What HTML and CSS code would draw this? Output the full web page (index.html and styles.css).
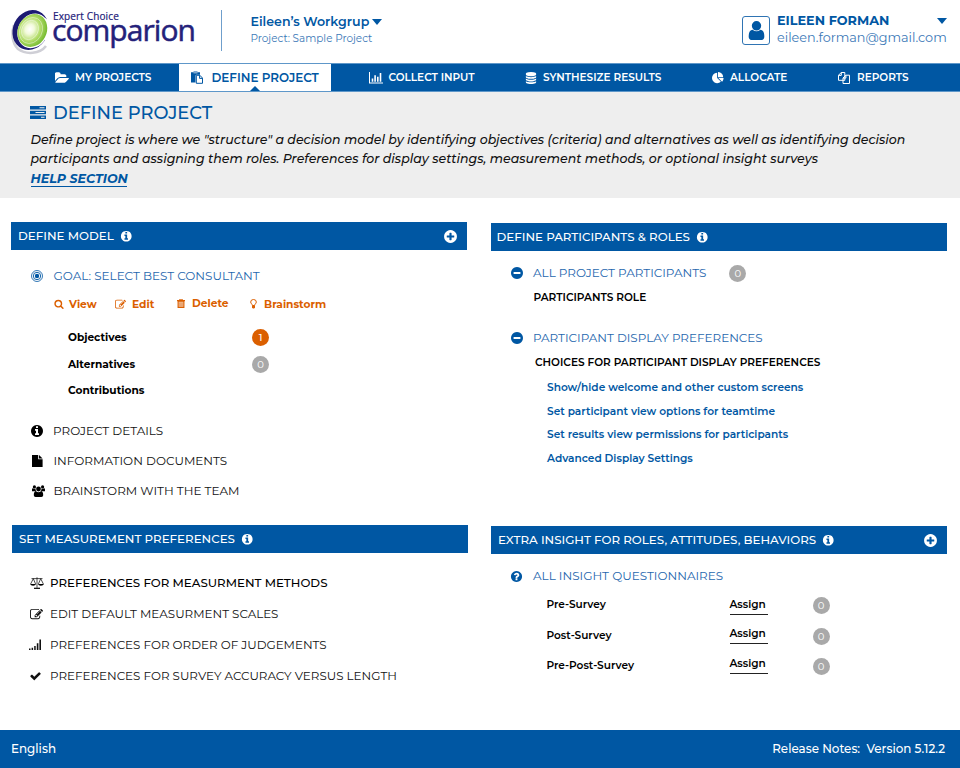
FILE: index.html
```html
<!DOCTYPE html>
<html lang="en">
<head>
<meta charset="utf-8">
<title>Comparion - Define Project</title>
<link rel="stylesheet" href="styles.css">
</head>
<body>
<svg class="sprite" aria-hidden="true">
  <symbol id="info" viewBox="0 0 1792 1792"><path d="M1152 1376v-160q0-14-9-23t-23-9h-96v-512q0-14-9-23t-23-9h-320q-14 0-23 9t-9 23v160q0 14 9 23t23 9h96v320h-96q-14 0-23 9t-9 23v160q0 14 9 23t23 9h448q14 0 23-9t9-23zm-128-896v-160q0-14-9-23t-23-9h-192q-14 0-23 9t-9 23v160q0 14 9 23t23 9h192q14 0 23-9t9-23zm640 416q0 209-103 385.500t-279.500 279.500-385.500 103-385.500-103-279.500-279.500-103-385.500 103-385.500 279.500-279.500 385.500-103 385.500 103 279.500 279.500 103 385.500z"/></symbol>
  <symbol id="plus" viewBox="0 0 1792 1792"><path d="M1344 960v-128q0-26-19-45t-45-19h-256v-256q0-26-19-45t-45-19h-128q-26 0-45 19t-19 45v256h-256q-26 0-45 19t-19 45v128q0 26 19 45t45 19h256v256q0 26 19 45t45 19h128q26 0 45-19t19-45v-256h256q26 0 45-19t19-45zm320-64q0 209-103 385.500t-279.500 279.500-385.500 103-385.500-103-279.500-279.500-103-385.500 103-385.500 279.500-279.500 385.500-103 385.500 103 279.500 279.500 103 385.500z"/></symbol>
  <symbol id="minus" viewBox="0 0 1792 1792"><path d="M1344 960v-128q0-26-19-45t-45-19h-768q-26 0-45 19t-19 45v128q0 26 19 45t45 19h768q26 0 45-19t19-45zm320-64q0 209-103 385.500t-279.500 279.500-385.500 103-385.500-103-279.500-279.500-103-385.500 103-385.500 279.500-279.500 385.500-103 385.500 103 279.500 279.500 103 385.500z"/></symbol>
  <symbol id="question" viewBox="0 0 1792 1792"><path d="M1024 1376v-192q0-14-9-23t-23-9h-192q-14 0-23 9t-9 23v192q0 14 9 23t23 9h192q14 0 23-9t9-23zm256-672q0-88-55.500-163t-138.500-116-170-41q-243 0-371 213-15 24 8 42l132 100q7 6 19 6 16 0 25-12 53-68 86-92 34-24 86-24 48 0 85.500 26t37.500 59q0 38-20 61t-68 45q-63 28-115.500 86.500t-52.500 125.500v36q0 14 9 23t23 9h192q14 0 23-9t9-23q0-19 21.500-49.500t54.500-49.500q32-18 49-28.500t46-35 44.500-48 28-60.500 12.500-81zm384 192q0 209-103 385.500t-279.500 279.500-385.500 103-385.500-103-279.500-279.500-103-385.500 103-385.500 279.500-279.500 385.500-103 385.500 103 279.500 279.500 103 385.500z"/></symbol>
  <symbol id="folder" viewBox="-40 0 1872 1792"><path d="M1815 952q0 31-31 66l-336 396q-43 51-120.500 86.500t-143.500 35.500h-1088q-34 0-60.500-13t-26.500-43q0-31 31-66l336-396q43-51 120.500-86.500t143.500-35.500h1088q34 0 60.500 13t26.500 43zm-343-344v160h-832q-94 0-197 47.500t-164 119.500l-337 396-5 6q0-4-.5-12.500t-.5-12.500v-960q0-92 66-158t158-66h320q92 0 158 66t66 158v32h544q92 0 158 66t66 158z"/></symbol>
  <symbol id="paste" viewBox="0 0 12 13"><path fill-rule="evenodd" d="M0 1.200h2.500V.4h4v.8H9v2.500H5.200L4.500 4.500V11.500H0zM2.500 1.500v.7h4v-.7z"/><path d="M5.300 4.300h3.600l2.600 2.800v5.200H5.300z" fill="#fff" stroke="currentColor"/><path d="M8.600 4.300v3.100h2.900" fill="none" stroke="currentColor"/></symbol>
  <symbol id="chart" viewBox="0 0 14 12"><path d="M0 0h1v10.500h13v1H0zM2.700 6.500h1.600v3.200H2.700zM5.300 3.200h1.600v6.500H5.300zM8 4.800h1.600v4.900H8zM10.700 1h1.600v8.700h-1.600z"/></symbol>
  <symbol id="database" viewBox="0 0 1792 1792"><path d="M896 768q237 0 443-43t325-127v170q0 69-103 128t-280 93.500-385 34.500-385-34.500-280-93.500-103-128v-170q119 84 325 127t443 43zm0 768q237 0 443-43t325-127v170q0 69-103 128t-280 93.500-385 34.500-385-34.500-280-93.500-103-128v-170q119 84 325 127t443 43zm0-384q237 0 443-43t325-127v170q0 69-103 128t-280 93.500-385 34.500-385-34.500-280-93.500-103-128v-170q119 84 325 127t443 43zm0-1152q208 0 385 34.500t280 93.500 103 128v128q0 69-103 128t-280 93.500-385 34.500-385-34.500-280-93.500-103-128v-128q0-69 103-128t280-93.500 385-34.500z"/></symbol>
  <symbol id="pie" viewBox="0 0 1792 1792"><path d="M768 890l546 546q-106 108-247.500 168t-298.500 60q-209 0-385.500-103t-279.500-279.500-103-385.500 103-385.500 279.500-279.500 385.500-103v762zm187 6h773q0 157-60 298.500t-168 247.500zm709-128h-768v-768q209 0 385.500 103t279.500 279.500 103 385.500z"/></symbol>
  <symbol id="files" viewBox="0 0 12 12"><path d="M3.200 .5h3.600v7.800H.5V3.300zM3.300 .5v2.900H.5M7.800 3.200h3.700v8.300H5V6zM7.900 3.200v2.900H5" fill="none" stroke="currentColor"/></symbol>
  <symbol id="tasks" viewBox="0 0 16 13"><path fill-rule="evenodd" d="M0 0h16v3.600H0zM9.500 1.300v1h5v-1zM0 4.700h16v3.600H0zM5.500 6v1h9V6zM0 9.400h16V13H0zM11 10.700v1h3.500v-1z"/></symbol>
  <symbol id="search" viewBox="0 0 1792 1792"><path d="M1216 832q0-185-131.500-316.500t-316.500-131.500-316.500 131.500-131.500 316.500 131.500 316.500 316.500 131.500 316.500-131.500 131.500-316.500zm512 832q0 52-38 90t-90 38q-54 0-90-38l-343-342q-179 124-399 124-143 0-273.500-55.500t-225-150-150-225-55.500-273.500 55.500-273.500 150-225 225-150 273.500-55.500 273.500 55.500 225 150 150 225 55.500 273.500q0 220-124 399l343 343q37 37 37 90z"/></symbol>
  <symbol id="edit" viewBox="0 0 1792 1792"><path d="M888 1184l116-116-152-152-116 116v56h96v96h56zm440-720q-16-16-33 1l-350 350q-17 17-1 33t33-1l350-350q17-17 1-33zm80 594v190q0 119-84.500 203.500t-203.500 84.500h-832q-119 0-203.500-84.500t-84.500-203.500v-832q0-119 84.500-203.500t203.500-84.500h832q63 0 117 25 15 7 18 23 3 17-9 29l-49 49q-14 14-32 8-23-6-45-6h-832q-66 0-113 47t-47 113v832q0 66 47 113t113 47h832q66 0 113-47t47-113v-126q0-13 9-22l64-64q15-15 35-7t20 29zm-96-738l288 288-672 672h-288v-288zm444 132l-92 92-288-288 92-92q28-28 68-28t68 28l152 152q28 28 28 68t-28 68z"/></symbol>
  <symbol id="trash" viewBox="0 0 8 9"><path d="M2.500 1V.4h3V1" fill="none" stroke="currentColor" stroke-width=".8"/><path d="M0 1h8v1.200H0z"/><path d="M1.100 2.200h5.800v6.200H1.100z" fill="#f0bf99" stroke="currentColor" stroke-width="1.100"/><path d="M3 3.500v3.600M5 3.500v3.600" stroke="currentColor" stroke-width=".5"/></symbol>
  <symbol id="bulb" viewBox="0 0 7 10"><path d="M2.400 6.500C2.400 5.200.7 4.600.7 3a2.800 2.500 0 0 1 5.600 0c0 1.600-1.700 2.200-1.700 3.500z" fill="none" stroke="currentColor"/><path d="M2 6.600h3v2.200l-1 .8H3l-1-.8z"/></symbol>
  <symbol id="file" viewBox="0 0 11 12"><path d="M0 0h6.200v4.300H10.600V12H0zM7 0l3.600 3.500H7z"/></symbol>
  <symbol id="users" viewBox="0 0 13 12"><circle cx="2.400" cy="1.900" r="1.600"/><circle cx="10.600" cy="1.900" r="1.600"/><circle cx="6.500" cy="4" r="2.400"/><path d="M0 6.300V4.600c0-1 .5-1.300 1-1.300 1 .7 2 .5 2.600.3-.2 1.200.2 2.200.7 2.700H0zM13 6.300V4.600c0-1-.5-1.300-1-1.300-1 .7-2 .5-2.600.3.200 1.200-.2 2.200-.7 2.700H13zM1.800 10c0-2.400.8-3.700 2.200-3.700 1.500 1.300 3.500 1.300 5 0 1.400 0 2.200 1.300 2.200 3.700 0 1.200-.7 1.900-1.800 1.900H3.600c-1.100 0-1.800-.7-1.800-1.900z"/></symbol>
  <symbol id="scale" viewBox="0 0 14 12"><g fill="none" stroke="currentColor" stroke-width=".7"><path d="M1.500 1.600h11M7 .3v10.500M3.300 1.700L.6 7M3.300 1.700L5.600 7M10.700 1.700L8.400 7M10.700 1.700L13.400 7"/><path d="M4 11.300h6" stroke-width="1.200"/></g><path d="M.2 7h5.700c-.3 1.200-1.300 1.700-2.800 1.700S.5 8.200.2 7zM8.100 7h5.700c-.3 1.200-1.300 1.700-2.900 1.700S8.400 8.200 8.100 7z"/></symbol>
  <symbol id="signal" viewBox="0 0 12 11"><path d="M0 9.600h1.500V11H0zM2.600 8.800h1.500V11H2.600zM5.200 7h1.500v4H5.200zM7.800 4.300h1.600V11H7.800zM10.400 .5H12V11h-1.600z"/></symbol>
  <symbol id="check" viewBox="0 0 1792 1792"><path d="M1671 566q0 40-28 68l-724 724-136 136q-28 28-68 28t-68-28l-136-136-362-362q-28-28-28-68t28-68l136-136q28-28 68-28t68 28l294 295 656-657q28-28 68-28t68 28l136 136q28 28 28 68z"/></symbol>
  <symbol id="target" viewBox="0 0 12 12"><g fill="none" stroke="currentColor"><circle cx="6" cy="6" r="5.500" stroke-width=".8"/><circle cx="6" cy="6" r="3.700" stroke-width=".9"/></g><circle cx="6" cy="6" r="2.200"/></symbol>
  <symbol id="user" viewBox="200 128 1392 1536"><path d="M1536 1399q0 109-62.500 187t-150.500 78h-854q-88 0-150.500-78t-62.500-187q0-85 8.500-160.500t31.500-152 58.500-131 94-89 134.500-34.500q131 128 313 128t313-128q76 0 134.500 34.500t94 89 58.500 131 31.500 152 8.500 160.500zm-256-887q0 159-112.500 271.500t-271.500 112.500-271.500-112.500-112.500-271.500 112.500-271.500 271.500-112.500 271.500 112.500 112.500 271.500z"/></symbol>
</svg>

<header class="top">
  <div class="logo">
    <svg class="logo-mark" viewBox="0 0 40 46">
      <defs><radialGradient id="lime" cx=".4" cy=".5" r=".6"><stop offset="0" stop-color="#fff"/><stop offset=".25" stop-color="#f2fadb"/><stop offset=".6" stop-color="#b4dd6b"/><stop offset="1" stop-color="#72b92c"/></radialGradient></defs>
      <path d="M35 38C29 46 15 47 7 41C1 35 0 25 3 17" fill="none" stroke="#cfcfd6" stroke-width="2.500"/>
      <ellipse cx="19.500" cy="22" rx="17.500" ry="20.500" transform="rotate(25 19.500 22)" fill="#1c1a72"/>
      <ellipse cx="22" cy="22.800" rx="15" ry="18" transform="rotate(28 22 22.800)" fill="#fff"/>
      <path d="M34 10L40 14V32L34 35z" fill="#fff"/>
      <ellipse cx="21.300" cy="22.500" rx="14.300" ry="17" transform="rotate(28 21.300 22.500)" fill="url(#lime)"/>
      <g fill="none" stroke="#fff" stroke-width=".6" opacity=".65"><ellipse cx="20" cy="22.500" rx="11" ry="13.500" transform="rotate(28 20 22.500)"/><ellipse cx="19" cy="22" rx="8" ry="10" transform="rotate(28 19 22)"/></g>
    </svg>
    <div class="logo-text"><span class="logo-small">Expert Choice</span><span class="logo-big">comparion</span></div>
  </div>
  <div class="workgroup">
    <div class="workgroup-name">Eileen’s Workgrup<i class="caret"></i></div>
    <div class="workgroup-project">Project: Sample Project</div>
  </div>
  <div class="account">
    <span class="avatar"><svg><use href="#user"/></svg></span>
    <div class="account-text">
      <div class="account-name"><span>EILEEN FORMAN</span><i class="caret"></i></div>
      <div class="account-mail">eileen.forman@gmail.com</div>
    </div>
  </div>
</header>

<nav class="nav">
  <a class="nav-item"><svg class="i-folder"><use href="#folder"/></svg><span>MY PROJECTS</span></a>
  <a class="nav-item active"><svg class="i-paste"><use href="#paste"/></svg><span>DEFINE PROJECT</span></a>
  <a class="nav-item"><svg class="i-chart"><use href="#chart"/></svg><span>COLLECT INPUT</span></a>
  <a class="nav-item"><svg class="i-db"><use href="#database"/></svg><span>SYNTHESIZE RESULTS</span></a>
  <a class="nav-item"><svg class="i-pie"><use href="#pie"/></svg><span>ALLOCATE</span></a>
  <a class="nav-item"><svg class="i-files"><use href="#files"/></svg><span>REPORTS</span></a>
</nav>

<section class="intro">
  <h1><svg><use href="#tasks"/></svg>DEFINE PROJECT</h1>
  <p>Define project is where we "structure" a decision model by identifying objectives (criteria) and alternatives as well as identifying decision<br>
  participants and assigning them roles. Preferences for display settings, measurement methods, or optional insight surveys<br>
  <a class="help">HELP SECTION</a></p>
</section>

<main class="board">
  <div class="column">
    <section class="panel tall">
      <h2><span>DEFINE MODEL</span><svg class="info"><use href="#info"/></svg><svg class="plus"><use href="#plus"/></svg></h2>
      <div class="model">
        <div class="row blue"><svg class="i-12"><use href="#target"/></svg><span>GOAL: SELECT BEST CONSULTANT</span></div>
        <div class="actions">
          <a><svg class="i-10"><use href="#search"/></svg>View</a>
          <a><svg class="i-11"><use href="#edit"/></svg>Edit</a>
          <a class="up"><svg class="i-trash"><use href="#trash"/></svg>Delete</a>
          <a><svg class="i-bulb"><use href="#bulb"/></svg>Brainstorm</a>
        </div>
        <div class="stat"><span>Objectives</span><b class="badge on">1</b></div>
        <div class="stat"><span>Alternatives</span><b class="badge">0</b></div>
        <div class="stat"><span>Contributions</span></div>
        <div class="links">
          <div class="row"><svg class="i-14"><use href="#info"/></svg><span>PROJECT DETAILS</span></div>
          <div class="row"><svg class="i-file"><use href="#file"/></svg><span>INFORMATION DOCUMENTS</span></div>
          <div class="row"><svg class="i-users"><use href="#users"/></svg><span>BRAINSTORM WITH THE TEAM</span></div>
        </div>
      </div>
    </section>
    <section class="panel shifted">
      <h2><span>SET MEASUREMENT PREFERENCES</span><svg class="info"><use href="#info"/></svg></h2>
      <div class="measure">
        <div class="row strong"><svg class="i-scale"><use href="#scale"/></svg><span>PREFERENCES FOR MEASURMENT METHODS</span></div>
        <div class="row"><svg class="i-13"><use href="#edit"/></svg><span>EDIT DEFAULT MEASURMENT SCALES</span></div>
        <div class="row"><svg class="i-signal"><use href="#signal"/></svg><span>PREFERENCES FOR ORDER OF JUDGEMENTS</span></div>
        <div class="row"><svg class="i-12"><use href="#check"/></svg><span>PREFERENCES FOR SURVEY ACCURACY VERSUS LENGTH</span></div>
      </div>
    </section>
  </div>

  <div class="column right">
    <section class="panel tall">
      <h2><span>DEFINE PARTICIPANTS &amp; ROLES</span><svg class="info"><use href="#info"/></svg></h2>
      <div class="people">
        <div class="row blue"><svg class="i-14"><use href="#minus"/></svg><span>ALL PROJECT PARTICIPANTS</span><b class="badge">0</b></div>
        <div class="caption">PARTICIPANTS ROLE</div>
        <div class="row blue second"><svg class="i-14"><use href="#minus"/></svg><span>PARTICIPANT DISPLAY PREFERENCES</span></div>
        <div class="caption inset">CHOICES FOR PARTICIPANT DISPLAY PREFERENCES</div>
        <ul class="choices">
          <li>Show/hide welcome and other custom screens</li>
          <li>Set participant view options for teamtime</li>
          <li>Set results view permissions for participants</li>
          <li>Advanced Display Settings</li>
        </ul>
      </div>
    </section>
    <section class="panel">
      <h2 class="inset"><span>EXTRA INSIGHT FOR ROLES, ATTITUDES, BEHAVIORS</span><svg class="info"><use href="#info"/></svg><svg class="plus"><use href="#plus"/></svg></h2>
      <div class="insight">
        <div class="row blue"><svg class="i-13"><use href="#question"/></svg><span>ALL INSIGHT QUESTIONNAIRES</span></div>
        <div class="survey"><span>Pre-Survey</span><a>Assign</a><b class="badge">0</b></div>
        <div class="survey"><span>Post-Survey</span><a>Assign</a><b class="badge">0</b></div>
        <div class="survey"><span>Pre-Post-Survey</span><a>Assign</a><b class="badge">0</b></div>
      </div>
    </section>
  </div>
</main>

<footer class="footer"><span>English</span><span>Release Notes:&nbsp; Version 5.12.2</span></footer>
</body>
</html>
```
FILE: styles.css
```css
* { box-sizing: border-box; }
body {
  margin: 0; width: 960px; height: 768px; overflow: hidden;
  display: flex; flex-direction: column;
  background: #fff; color: #111;
  font-family: Montserrat, Inter, "Liberation Sans", sans-serif;
}
svg { fill: currentColor; flex: none; display: block; overflow: visible; }
.sprite { position: absolute; width: 0; height: 0; }
h1, h2, p, ul { margin: 0; padding: 0; }
ul { list-style: none; }

/* Header */
.top { height: 63px; flex: none; display: flex; }
.logo { width: 221px; display: flex; padding: 8px 0 0 11px; }
.logo-mark { width: 40px; height: 46px; }
.logo-text { display: flex; flex-direction: column; padding-left: 1px; font-family: "Open Sans", sans-serif; color: #24217a; white-space: nowrap; }
.logo-small { font-size: 10px; line-height: 14px; margin-top: 1px; padding-left: 1px; letter-spacing: .14px; -webkit-text-stroke: .2px #24217a; }
.logo-big { font-size: 30px; line-height: 30px; margin-top: -8px; letter-spacing: -.94px; -webkit-text-stroke: .5px #24217a; }
.workgroup { height: 41px; margin-top: 10px; border-left: 1px solid #6f9fcc; padding-left: 28.500px; color: #0057a3; }
.workgroup-name { display: flex; align-items: center; font-size: 12.600px; font-weight: 600; line-height: 16px; margin-top: 4px; }
.caret { border: solid transparent; border-width: 6px 5.500px 0; border-top-color: #0057a3; margin-left: 3px; }
.workgroup-project { font-size: 10.450px; line-height: 16px; color: #3c79b7; margin-top: 1px; }
.account { margin: 13px 13px 0 auto; display: flex; color: #0057a3; }
.avatar { width: 28px; height: 29px; margin-top: 3px; border: 1px solid #2f74b3; border-radius: 3px; display: flex; justify-content: center; align-items: center; }
.avatar svg { width: 17px; height: 19px; }
.account-text { width: 170px; margin-left: 7px; }
.account-name { display: flex; align-items: center; justify-content: space-between; font-size: 12.800px; font-weight: 700; line-height: 16px; }
.account-mail { font-size: 12.800px; line-height: 17px; color: #3c79b7; white-space: nowrap; }

/* Navigation */
.nav {
  height: 29px; flex: none; display: grid; padding-left: 55px;
  grid-template-columns: 124px 190px 157px 186px 126px 1fr;
  background: #0057a3; color: #fff; border: solid #5e97c9; border-width: 1px 0;
  font-size: 10.500px; font-weight: 600; white-space: nowrap;
}
.nav-item { display: flex; align-items: center; }
.nav-item svg { width: 13px; height: 12px; margin-right: 7px; }
.nav-item .i-folder { width: 14px; height: 14px; margin-right: 6px; }
.nav-item .i-chart { width: 14px; height: 12px; margin: 0 6px 0 -.5px; }
.nav-item .i-db { width: 12px; height: 12px; margin: 0 6px 0 -1px; }
.nav-item .i-pie { width: 12px; height: 12px; margin-right: 6px; }
.nav-item .i-files { width: 12px; margin-right: 7px; }
.active { position: relative; width: 152px; padding-left: 12px; background: #fff; color: #0057a3; font-size: 11.950px; }
.nav-item.active svg { width: 12px; height: 13px; margin-right: 8.500px; }
.active::after { content: ""; position: absolute; bottom: 0; left: 71px; border: solid transparent; border-width: 0 5px 5px; border-bottom-color: #0057a3; }

/* Intro */
.intro { height: 106px; flex: none; background: #eee; padding: 10px 30px 0; }
h1 { display: flex; align-items: center; height: 20px; color: #0057a3; font-size: 17.850px; font-weight: 500; }
h1 svg { width: 16px; height: 13px; margin-right: 7px; }
.intro p { margin-top: 8px; padding-left: .5px; font-size: 12.570px; font-weight: 500; font-style: italic; line-height: 19.300px; white-space: nowrap; }
.help { color: #0057a3; font-size: 12.600px; font-weight: 700; display: inline-block; height: 17px; line-height: 18px; border-bottom: 1px solid #0057a3; width: 96px; }

/* Panels */
.board { flex: 1; display: flex; padding-left: 11px; gap: 24px; padding-top: 24px; }
.column { width: 456px; }
.column.right { padding-top: 1px; }
.panel.tall { height: 303px; }
.panel.shifted { margin: 0 -1px 0 1px; }
h2 { display: flex; align-items: center; height: 28px; background: #0057a3; color: #fff; font-size: 11.850px; font-weight: 500; padding: 0 9px 0 7px; white-space: nowrap; }
.right h2 { padding-left: 5.500px; }
.right h2.inset { padding-left: 7px; }
.right h2.inset span { padding-bottom: 1px; }
.info { width: 12.500px; height: 12.500px; margin-left: 6px; }
.plus { width: 15px; height: 15px; margin-left: auto; }

.row { display: flex; align-items: center; font-size: 11.970px; white-space: nowrap; }
.row span { padding-bottom: 1px; }
.blue { color: #1f67ae; }
.row > svg { margin-right: 10px; }
.row.blue > svg { color: #0057a3; }
.i-10 { width: 10px; height: 10px; }
.i-11 { width: 11px; height: 11px; }
.i-12 { width: 12px; height: 12px; }
.i-13 { width: 13px; height: 13px; }
.i-14 { width: 14px; height: 14px; }

.model { padding: 12px 0 0 20px; }
.model > .row { height: 28px; }
.model > .row > svg { margin-right: 10.500px; }
.actions { display: grid; grid-template-columns: 61px 62px 73px auto; height: 28px; padding-left: 23px; font-size: 10.650px; font-weight: 700; color: #db5f00; margin-bottom: 6px; }
.actions a { display: flex; align-items: center; }
.actions svg { margin-right: 5px; }
.actions .up { padding-bottom: 1px; }
.actions .i-11 { margin-right: 6px; }
.actions .i-trash { width: 8px; height: 9px; margin-right: 7px; }
.actions .i-bulb { width: 7px; height: 10px; margin-right: 7px; }
.stat { display: grid; grid-template-columns: 184px auto; align-items: center; justify-content: start; height: 26.700px; padding-left: 37px; font-size: 10.600px; font-weight: 700; color: #000; }
.badge { width: 17px; height: 17px; border-radius: 50%; background: #a9a9a9; color: #fff; display: flex; align-items: center; justify-content: center; font-size: 10px; font-weight: 400; }
.stat .badge { margin-top: 1px; }
.badge.on { background: #db5f00; font-weight: 500; }
.links { padding-top: 12px; }
.links .row { height: 30px; }
.links svg { color: #000; }
.links .row > .i-14 { margin: 0 9px 0 -1px; }
.links .row > .i-file { width: 11px; height: 12px; margin: 0 10.500px 0 1px; }
.links .row > .i-users { width: 13px; height: 12px; margin: 0 8.500px 0 1px; }

.measure { padding: 15px 0 0 18px; }
.measure .row { height: 30.800px; font-size: 11.900px; }
.measure .row > svg { width: 13px; margin-right: 7px; }
.measure .row > .i-scale { width: 14px; height: 12px; margin-right: 6px; }
.measure .row > .i-signal { width: 12px; height: 11px; margin: 0 9px 0 -1px; }
.measure .row > .i-12 { margin-left: -1px; margin-right: 8px; }
.measure .strong { font-size: 11.830px; font-weight: 500; color: #000; }

.people { padding: 8px 0 0 19px; }
.people .row { height: 28px; }
.people .row > svg { margin-right: 9px; }
.people .badge { margin-left: 23px; }
.people .second { margin-top: 15px; height: 29px; font-size: 11.950px; }
.caption { height: 21px; line-height: 21px; padding-left: 23.500px; font-size: 10.550px; font-weight: 600; color: #000; white-space: nowrap; }
.caption.inset { padding-left: 25px; }
.choices { padding: 3px 0 0 37px; color: #0057a3; font-size: 10.600px; font-weight: 600; line-height: 23.700px; }

.insight { padding: 8px 0 0 19px; }
.insight .row { height: 28px; }
.insight .row > svg { margin-right: 10px; }
.survey { display: grid; grid-template-columns: 183px 83px auto; justify-content: start; align-items: center; height: 30.500px; padding-left: 36.500px; font-size: 10.550px; font-weight: 600; color: #000; }
.survey span { padding-bottom: 1px; }
.survey a { width: 38px; height: 20px; line-height: 20px; border-bottom: 1px solid #222; }
.survey:nth-child(n+3) a { margin-bottom: 4px; }
.survey:nth-child(3) .badge { margin-top: 2px; }

/* Footer */
.footer { height: 38px; flex: none; display: flex; justify-content: space-between; align-items: center; padding: 0 15px 2px 11px; background: #0057a3; color: #fff; font-size: 11.920px; font-weight: 500; }
```
